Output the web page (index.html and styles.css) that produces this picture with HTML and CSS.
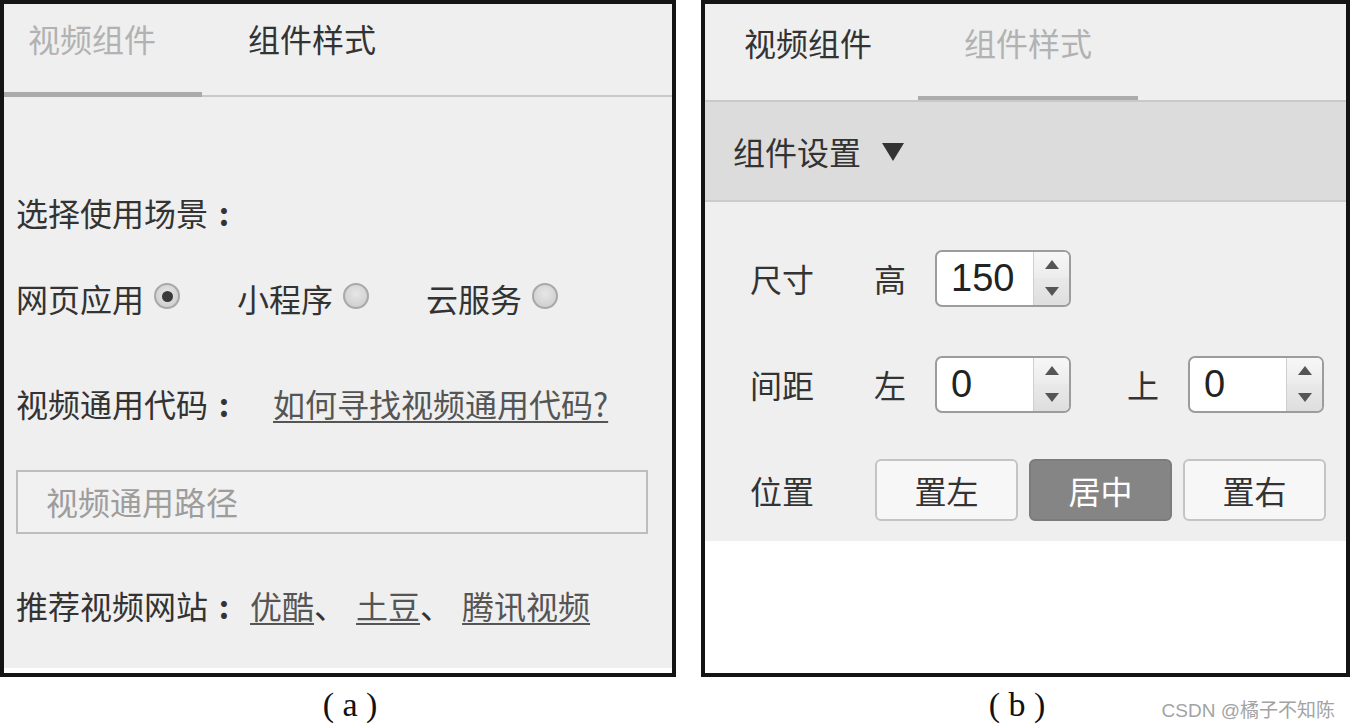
FILE: index.html
```html
<!DOCTYPE html>
<html lang="zh-CN">
<head>
<meta charset="utf-8">
<title>视频组件</title>
<link rel="stylesheet" href="styles.css">
</head>
<body>
<div class="page">
  <figure class="fig fig-a">
    <div class="panel panel-a">
      <div class="inner-a">
        <div class="tabs tabs-a">
          <div class="tab tab-a1 is-current">视频组件</div>
          <div class="tab tab-a2 is-dark">组件样式</div>
        </div>
        <div class="content-a">
          <div class="line q1">选择使用场景<span class="colon">:</span></div>
          <div class="line radios">
            <label class="radio-item">网页应用<span class="radio checked"></span></label>
            <label class="radio-item">小程序<span class="radio"></span></label>
            <label class="radio-item">云服务<span class="radio"></span></label>
          </div>
          <div class="line code-row">视频通用代码<span class="colon">:</span><a class="link link-help">如何寻找视频通用代码?</a></div>
          <div class="path-input">视频通用路径</div>
          <div class="line sites">推荐视频网站<span class="colon">:</span><a class="link link-site">优酷</a>、<a class="link link-site">土豆</a>、<a class="link link-site">腾讯视频</a></div>
        </div>
      </div>
    </div>
    <figcaption class="caption caption-a">( a )</figcaption>
  </figure>

  <figure class="fig fig-b">
    <div class="panel panel-b">
      <div class="tabs tabs-b">
        <div class="tab tab-b is-dark">视频组件</div>
        <div class="tab tab-b is-current">组件样式</div>
      </div>
      <div class="section-head">
        <span>组件设置</span>
        <svg class="caret" width="24" height="20" viewBox="0 0 24 20"><path d="M1 1 H23 L12 19 Z" fill="#333"/></svg>
      </div>
      <div class="form">
        <div class="row">
          <div class="label">尺寸</div>
          <div class="sub">高</div>
          <div class="spin">
            <div class="spin-val">150</div>
            <div class="spin-btns">
              <div class="spin-up"><svg width="14" height="9" viewBox="0 0 14 9"><path d="M7 0 L14 9 H0 Z" fill="#555"/></svg></div>
              <div class="spin-down"><svg width="14" height="9" viewBox="0 0 14 9"><path d="M0 0 H14 L7 9 Z" fill="#555"/></svg></div>
            </div>
          </div>
        </div>
        <div class="row">
          <div class="label">间距</div>
          <div class="sub">左</div>
          <div class="spin">
            <div class="spin-val">0</div>
            <div class="spin-btns">
              <div class="spin-up"><svg width="14" height="9" viewBox="0 0 14 9"><path d="M7 0 L14 9 H0 Z" fill="#555"/></svg></div>
              <div class="spin-down"><svg width="14" height="9" viewBox="0 0 14 9"><path d="M0 0 H14 L7 9 Z" fill="#555"/></svg></div>
            </div>
          </div>
          <div class="sub sub-gap">上</div>
          <div class="spin">
            <div class="spin-val">0</div>
            <div class="spin-btns">
              <div class="spin-up"><svg width="14" height="9" viewBox="0 0 14 9"><path d="M7 0 L14 9 H0 Z" fill="#555"/></svg></div>
              <div class="spin-down"><svg width="14" height="9" viewBox="0 0 14 9"><path d="M0 0 H14 L7 9 Z" fill="#555"/></svg></div>
            </div>
          </div>
        </div>
        <div class="row">
          <div class="label">位置</div>
          <div class="btn-group">
            <button class="btn">置左</button>
            <button class="btn btn-active">居中</button>
            <button class="btn">置右</button>
          </div>
        </div>
      </div>
    </div>
    <figcaption class="caption caption-b">( b )<span class="watermark">CSDN @橘子不知陈</span></figcaption>
  </figure>
</div>
</body>
</html>
```

FILE: styles.css
```css
* { box-sizing: border-box; }

html, body {
  margin: 0;
  padding: 0;
  background: #fff;
}

body {
  width: 1350px;
  height: 727px;
  overflow: hidden;
  font-family: "Noto Sans CJK SC", "Noto Sans", sans-serif;
  color: #333;
}

.page {
  display: flex;
  gap: 25px;
}

.fig {
  margin: 0;
  display: flex;
  flex-direction: column;
}

.fig-a { width: 676px; }
.fig-b { width: 649px; }

.panel {
  height: 677px;
  border: 4px solid #141414;
  background: #fff;
}

/* ---------- panel a ---------- */
.inner-a {
  height: 664px;
  background: #efefef;
}

.tabs {
  display: flex;
  font-size: 32px;
}

.tab {
  line-height: 44px;
  color: #b2b2b2;
}

.tab.is-dark { color: #333; }

.tabs-a {
  border-bottom: 2px solid #c9c9c9;
}

.tabs-a .tab {
  height: 93px;
  margin-bottom: -2px;
  padding-top: 12px;
  border-bottom: 5px solid transparent;
}

.tabs-a .tab.is-current { border-bottom-color: #ababab; }

.tab-a1 { width: 198px; padding-left: 24px; }
.tab-a2 { padding-left: 46px; }

.content-a {
  padding: 0 12px;
  font-size: 32px;
}

.line {
  line-height: 40px;
  white-space: nowrap;
}

.colon {
  display: inline-block;
  width: 32px;
  text-align: center;
  font-weight: bold;
}

.q1 { margin-top: 95px; }

.radios {
  margin-top: 46px;
  display: flex;
  align-items: center;
  gap: 57px;
}

.radio-item {
  display: flex;
  align-items: center;
}

.radio {
  width: 26px;
  height: 26px;
  margin-left: 10px;
  margin-top: -4px;
  border-radius: 50%;
  border: 2px solid #a8a8a8;
  background: radial-gradient(circle at 50% 40%, #e6e6e6 0%, #d2d2d2 70%, #c4c4c4 100%);
  display: flex;
  align-items: center;
  justify-content: center;
}

.radio.checked::before {
  content: "";
  width: 11px;
  height: 11px;
  border-radius: 50%;
  background: #3a3a3a;
}

.code-row { margin-top: 65px; }

.link {
  color: #555;
  text-decoration: underline;
  text-decoration-thickness: 2px;
  text-underline-offset: 4px;
}

.link-help { margin-left: 33px; }

.path-input {
  margin-top: 47px;
  width: 632px;
  height: 64px;
  border: 2px solid #bdbdbd;
  background: #f1f1f1;
  padding-left: 28px;
  line-height: 58px;
  color: #9d9d9d;
}

.sites { margin-top: 51px; }

.link-site { margin-left: 10px; }

/* ---------- panel b ---------- */
.tabs-b {
  background: #efefef;
}

.tab-b {
  width: 216px;
  height: 96px;
  padding-top: 16px;
  text-align: center;
  border-bottom: 4px solid transparent;
}

.tab-b:first-child { width: 206px; }
.tab-b.is-current { border-bottom-color: #ababab; width: 220px; margin-left: 7px; }

.section-head {
  height: 102px;
  border-top: 2px solid #c9c9c9;
  border-bottom: 2px solid #cbcbcb;
  background: #dcdcdc;
  display: flex;
  align-items: center;
  padding-left: 28px;
  font-size: 32px;
  color: #333;
}

.caret { margin-left: 20px; margin-top: 2px; }

.form {
  background: #efefef;
  padding: 45px 0 20px 45px;
  display: flex;
  flex-direction: column;
  gap: 44px;
  font-size: 32px;
}

.row {
  height: 62px;
  display: flex;
  align-items: center;
}

.label { width: 124px; }
.sub { width: 61px; }
.sub-gap { margin-left: 56px; }

.spin {
  width: 136px;
  height: 57px;
  border: 2px solid #9c9c9c;
  border-radius: 7px;
  background: #fff;
  display: flex;
  overflow: hidden;
}

.spin-val {
  flex: 1;
  padding-left: 14px;
  font-family: "Liberation Sans", Arial, sans-serif;
  font-size: 38px;
  line-height: 53px;
  color: #222;
}

.spin-btns {
  width: 36px;
  border-left: 1px solid #cfcfcf;
  display: flex;
  flex-direction: column;
}

.spin-up, .spin-down {
  flex: 1;
  display: flex;
  align-items: center;
  justify-content: center;
}

.spin-up { background: linear-gradient(#f7f7f7, #ececec); }
.spin-down { background: linear-gradient(#e9e9e9, #dedede); }

.btn-group {
  display: flex;
  gap: 11px;
  margin-left: 1px;
}

.btn {
  width: 143px;
  height: 62px;
  border: 2px solid #c4c4c4;
  border-radius: 6px;
  background: #f7f7f7;
  font-family: "Noto Sans CJK SC", sans-serif;
  font-size: 32px;
  color: #333;
  padding: 0;
}

.btn-active {
  background: #858585;
  border-color: #7c7c7c;
  color: #fff;
}

/* ---------- captions ---------- */
.caption {
  position: relative;
  height: 50px;
  display: flex;
  align-items: center;
  justify-content: center;
  font-family: "Liberation Serif", "Times New Roman", serif;
  font-size: 34px;
  color: #111;
  white-space: pre;
  padding-top: 6px;
}

.caption-a { padding-left: 24px; }
.caption-b { padding-right: 17px; }

.watermark {
  position: absolute;
  right: 15px;
  top: 18px;
  font-family: "Liberation Sans", "Noto Sans CJK SC", sans-serif;
  font-size: 19px;
  color: #a3a3a3;
  white-space: nowrap;
}
```
